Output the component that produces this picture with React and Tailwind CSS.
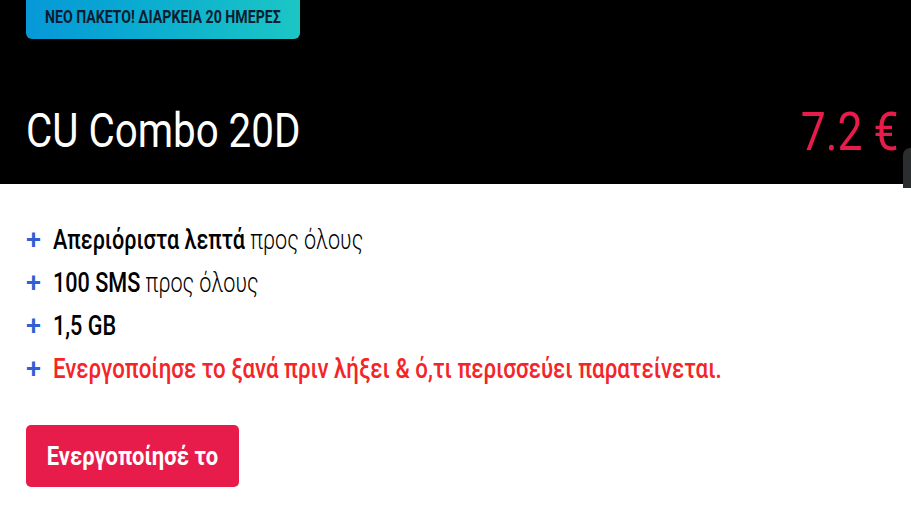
import React from 'react';

// Roboto squeezed horizontally to get the condensed face
const Narrow = ({ className = '', children }) => (
  <span className={`inline-block whitespace-nowrap origin-left ${className}`}>{children}</span>
);

const features = [
  { bold: 'Απεριόριστα λεπτά', rest: ' προς όλους' },
  { bold: '100 SMS', rest: ' προς όλους' },
  { bold: '1,5 GB', rest: '' },
];

const Plus = () => (
  <span className="w-[27px] shrink-0 text-[#2f5fd3] font-medium leading-[43px]">+</span>
);

const App = () => {
  return (
    <div className="w-[911px] h-[527px] bg-white overflow-hidden font-['Roboto',sans-serif]">
      {/* Header */}
      <div className="relative bg-black h-[184px] px-[26px] flex flex-col">
        <div className="self-start h-[39px] w-[274px] rounded-b-[6px] bg-gradient-to-r from-[#0798d8] to-[#1cc6c4] pt-[6px] pl-[19px]">
          <Narrow className="scale-x-[0.785] text-[18px] leading-[18px] font-bold text-[#0b1d30]">ΝΕΟ ΠΑΚΕΤΟ! ΔΙΑΡΚΕΙΑ 20 ΗΜΕΡΕΣ</Narrow>
        </div>
        <div className="flex items-start justify-between mt-[66px] mr-[-13px]">
          <h1 className="text-white text-[48px] leading-[52px] font-normal">
            <Narrow className="scale-x-[0.84]">CU Combo 20D</Narrow>
          </h1>
          <span className="mt-[1px] inline-block whitespace-nowrap scale-x-[0.84] origin-right text-[#e81c4b] text-[53px] leading-[52px] font-normal">
            7.2 €
          </span>
        </div>
        {/* edge of the next card */}
        <div className="absolute right-[-6px] top-[148px] w-[14px] h-[40px] rounded-t-[8px] bg-[#2a2e2e]" />
      </div>

      {/* Features */}
      <div className="px-[26px] pt-[35px]">
        <ul className="flex flex-col text-[27px]">
          {features.map((f) => (
            <li key={f.bold} className="flex h-[43px] leading-[43px] text-black">
              <Plus />
              <Narrow className="scale-x-[0.80]">
                <span className="font-medium">{f.bold}</span>
                <span className="font-light">{f.rest}</span>
              </Narrow>
            </li>
          ))}
          <li className="flex h-[43px] leading-[43px]">
            <Plus />
            <Narrow className="scale-x-[0.825] text-[#f52428] font-medium">
              Ενεργοποίησε το ξανά πριν λήξει &amp; ό,τι περισσεύει παρατείνεται.
            </Narrow>
          </li>
        </ul>
        <button className="mt-[34px] h-[62px] w-[213px] rounded-[5px] bg-[#e81c4b] text-white flex items-center justify-center">
          <span className="inline-block whitespace-nowrap scale-x-[0.845] text-[26px] leading-[26px] font-bold">
            Ενεργοποίησέ το
          </span>
        </button>
      </div>
    </div>
  );
};

export default App;
